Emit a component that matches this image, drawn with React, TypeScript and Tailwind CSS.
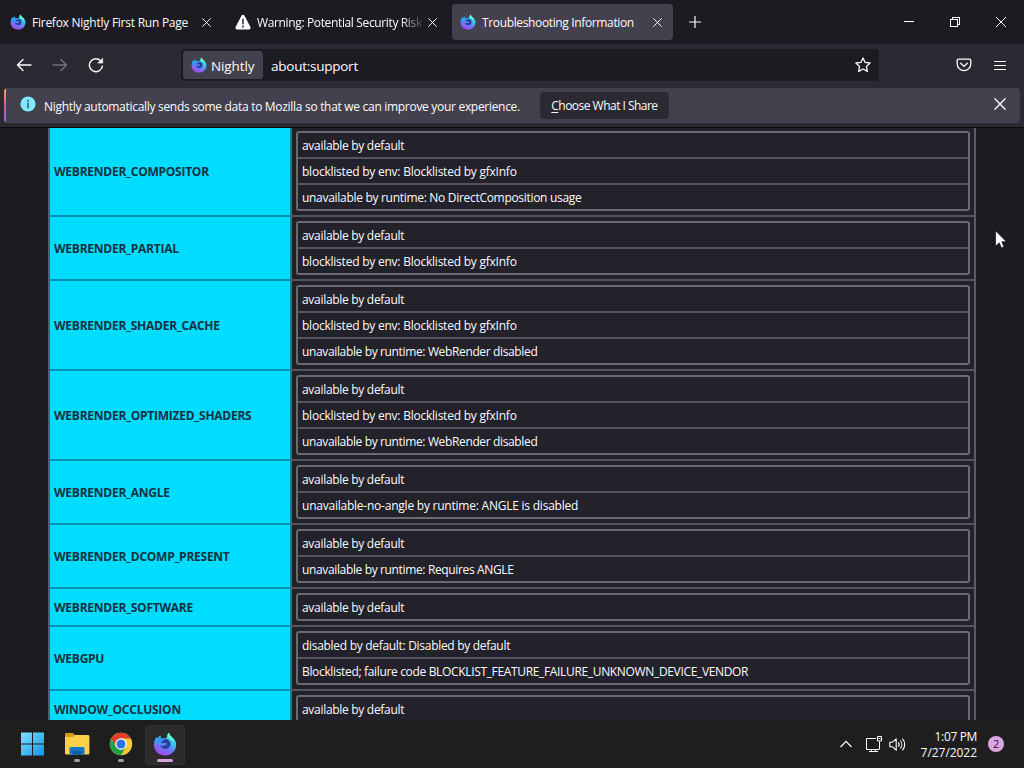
import type { ReactNode } from "react"

type Feature = {
  name: string
  log: string[]
}

const FEATURES: Feature[] = [
  {
    name: "WEBRENDER_COMPOSITOR",
    log: [
      "available by default",
      "blocklisted by env: Blocklisted by gfxInfo",
      "unavailable by runtime: No DirectComposition usage",
    ],
  },
  {
    name: "WEBRENDER_PARTIAL",
    log: ["available by default", "blocklisted by env: Blocklisted by gfxInfo"],
  },
  {
    name: "WEBRENDER_SHADER_CACHE",
    log: [
      "available by default",
      "blocklisted by env: Blocklisted by gfxInfo",
      "unavailable by runtime: WebRender disabled",
    ],
  },
  {
    name: "WEBRENDER_OPTIMIZED_SHADERS",
    log: [
      "available by default",
      "blocklisted by env: Blocklisted by gfxInfo",
      "unavailable by runtime: WebRender disabled",
    ],
  },
  {
    name: "WEBRENDER_ANGLE",
    log: ["available by default", "unavailable-no-angle by runtime: ANGLE is disabled"],
  },
  {
    name: "WEBRENDER_DCOMP_PRESENT",
    log: ["available by default", "unavailable by runtime: Requires ANGLE"],
  },
  {
    name: "WEBRENDER_SOFTWARE",
    log: ["available by default"],
  },
  {
    name: "WEBGPU",
    log: [
      "disabled by default: Disabled by default",
      "Blocklisted; failure code BLOCKLIST_FEATURE_FAILURE_UNKNOWN_DEVICE_VENDOR",
    ],
  },
  {
    name: "WINDOW_OCCLUSION",
    log: ["available by default"],
  },
]

// Letter spacing of a log line, by the kind of text in it
function lineTracking(line: string) {
  if (line.startsWith("blocklisted") || line.startsWith("unavailable-no")) return "tracking-[-0.23px]"
  if (line.endsWith("WebRender disabled") || line.endsWith("Requires ANGLE")) return "tracking-[-0.36px]"
  if (line.startsWith("Blocklisted")) return "tracking-[-0.34px]"
  return "tracking-[-0.3px]"
}

function NightlyLogo({ id, className }: { id: string; className: string }) {
  return (
    <svg viewBox="0 0 24 24" className={className}>
      <defs>
        <linearGradient id={`${id}-body`} x1="0.85" y1="0" x2="0.35" y2="1">
          <stop offset="0" stopColor="#5cf5d0" />
          <stop offset="0.35" stopColor="#2fd0f0" />
          <stop offset="0.65" stopColor="#6a7cf5" />
          <stop offset="1" stopColor="#a845ee" />
        </linearGradient>
        <linearGradient id={`${id}-flame`} x1="0" y1="0" x2="0.6" y2="1">
          <stop offset="0" stopColor="#25bdf6" />
          <stop offset="1" stopColor="#3f7df4" />
        </linearGradient>
      </defs>
      <path
        d="M16.200.8c.2 2.200 1.300 3 2.600 4.100C21.800 7.200 23.400 9.600 23.200 13c-.2 6.100-5 10.400-11.200 10.400C5.600 23.400.9 18.700.9 12.700c0-3 .9-5.700 2.800-7.700 0 .8.1 1.400.4 1.900C5 5.300 6 4.400 7.400 3.700c-.2 1 0 2 .6 2.700h3.200c1.200-.2 2.100-.5 2.900-1.100-.3-1.800.6-3.500 2.100-4.500z"
        fill={`url(#${id}-body)`}
      />
      <path
        d="M3.700 5c0 .8.1 1.400.4 1.900C5 5.300 6 4.400 7.400 3.700c-.2 1 0 2 .6 2.700h3.600c-.3 1.500-1.700 2-3 2.700-.5.3-.5 1-.4 1.700-2.400-.2-4.500.6-6.600 2.700.1-3.300.5-6.400 2.100-8.500z"
        fill={`url(#${id}-flame)`}
      />
      <path
        d="M8.200 10.800c.1-1 .4-1.500 1.300-1.900 1-.5 1.900-.9 2.200-1.800 2.800-.4 5.600 1.600 5.800 4.700.2 2.900-2 5.200-4.900 5.200-2.600 0-4.800-1.400-5.400-3.700 1.500.9 3 .8 4.300-.1.900-.6 1.500-1 2.500-.7-.8-1.600-2.200-1.700-3.500-1.200-.9.300-1.700.1-2.300-.5z"
        fill="#2b3fa4"
      />
      <path
        d="M16.200.8c.2 2.200 1.300 3 2.600 4.100 1.400 1.100 2 2.800 1.600 4.800-1-2.300-3.600-2.300-6.100-5.200 0-1.500.7-2.800 1.900-3.700z"
        fill="#6cf7cf"
      />
    </svg>
  )
}

function CloseIcon({ className, stroke }: { className: string; stroke: number }) {
  return (
    <svg viewBox="0 0 10 10" className={className} fill="none" stroke="#fbfbfe" strokeWidth={stroke} strokeLinecap="round">
      <path d="M.7.7l8.600 8.600M9.300.7L.7 9.300" />
    </svg>
  )
}

function TabStrip() {
  return (
    <div className="flex h-11 items-center">
      <div className="flex h-9 w-[226px] items-center pl-[10px]">
        <NightlyLogo id="tab1" className="size-4 shrink-0" />
        <span className="ml-[6px] w-[158px] whitespace-nowrap pt-[2px] tracking-[-0.25px]">Firefox Nightly First Run Page</span>
        <CloseIcon className="ml-3 size-[9px]" stroke={1.1} />
      </div>
      <div className="flex h-9 w-[226px] items-center pl-[9px]">
        <svg viewBox="0 0 16 16" className="size-4 shrink-0">
          <path d="M8 .8c.6 0 1.100.3 1.400.8l6 11.500c.6 1.100-.2 2.400-1.400 2.400H2c-1.200 0-2-1.300-1.400-2.400l6-11.500C6.900 1.100 7.400.8 8 .8z" fill="#fbfbfe" />
          <path d="M8 5.300v4.400M8 12v1" stroke="#1c1b22" strokeWidth="1.400" strokeLinecap="round" />
        </svg>
        <span className="ml-[6px] w-[168px] whitespace-nowrap pt-[2px] tracking-[-0.36px] [mask-image:linear-gradient(to_left,transparent,black_24px)]">
          Warning: Potential Security Risk
        </span>
        <CloseIcon className="ml-[3px] size-[9px] shrink-0" stroke={1.1} />
      </div>
      <div className="flex h-9 w-[221px] items-center rounded bg-[#42414d] pl-2">
        <NightlyLogo id="tab3" className="size-4 shrink-0" />
        <span className="ml-[6px] w-[158px] whitespace-nowrap pt-[2px] tracking-[-0.36px]">Troubleshooting Information</span>
        <CloseIcon className="ml-[13px] size-[9px]" stroke={1.1} />
      </div>
      <svg viewBox="0 0 12 12" className="ml-4 size-3" stroke="#fbfbfe" strokeWidth="1.200">
        <path d="M6 0v12M0 6h12" />
      </svg>
      <div className="ml-auto flex items-center pr-[18px]">
        <svg viewBox="0 0 10 10" className="size-[10px]" stroke="#fff" shapeRendering="crispEdges">
          <path d="M0 4.500h10" />
        </svg>
        <svg viewBox="0 0 10 10" className="ml-9 size-[10px]" stroke="#fff" fill="none" shapeRendering="crispEdges">
          <path d="M.5 2.500h7v7h-7zM2.500 2.500v-2h7v7h-2" />
        </svg>
        <svg viewBox="0 0 10 10" className="ml-9 size-[10px]" stroke="#fff" fill="none">
          <path d="M0 0l10 10M10 0L0 10" />
        </svg>
      </div>
    </div>
  )
}

function Toolbar() {
  return (
    <div className="flex h-11 items-center bg-[#2b2a33] pb-[2px]">
      <svg viewBox="0 0 16 16" className="ml-4 size-4" fill="none" stroke="#fbfbfe" strokeWidth="1.300" strokeLinecap="round" strokeLinejoin="round">
        <path d="M15 8H1.500M7 2.500L1.500 8 7 13.500" />
      </svg>
      <svg viewBox="0 0 16 16" className="ml-5 size-4" fill="none" stroke="#73727a" strokeWidth="1.300" strokeLinecap="round" strokeLinejoin="round">
        <path d="M1 8h13.500M9 2.500L14.500 8 9 13.500" />
      </svg>
      <svg viewBox="0 0 16 16" className="ml-5 size-4" fill="none" stroke="#fbfbfe" strokeWidth="1.400" strokeLinecap="round" strokeLinejoin="round">
        <path d="M14.300 9.300A6.500 6.500 0 1 1 12.600 3.700" />
        <path d="M14.700 1.500v4.600h-4.600z" fill="#fbfbfe" strokeWidth=".6" />
      </svg>
      <div className="ml-[77px] flex h-8 w-[698px] items-center rounded bg-[#1c1b22] pl-[2px] pr-2 text-[13.500px] tracking-[-0.25px]">
        <div className="flex h-7 w-20 items-center rounded-[3px] bg-[#42414d] pl-2">
          <NightlyLogo id="identity" className="size-4 shrink-0" />
          <span className="ml-1 pt-[2px] tracking-[-0.1px]">Nightly</span>
        </div>
        <span className="ml-2 pt-[2px]">about:support</span>
        <svg viewBox="0 0 16 16" className="ml-auto size-4" fill="none" stroke="#fbfbfe" strokeWidth="1.300" strokeLinejoin="round">
          <path d="M8 .9l2.100 4.500 5 .6-3.700 3.400 1 5L8 12l-4.400 2.400 1-5L.9 6l5-.6z" />
        </svg>
      </div>
      <svg viewBox="0 0 16 16" className="ml-[77px] size-4" fill="none" stroke="#fbfbfe" strokeWidth="1.300" strokeLinecap="round" strokeLinejoin="round">
        <path d="M2.500 2.200h11c.8 0 1.300.5 1.300 1.300v3.300a6.800 6.800 0 0 1-13.600 0V3.500c0-.8.5-1.300 1.300-1.300z" />
        <path d="M4.700 6.200L8 9.400l3.300-3.200" />
      </svg>
      <svg viewBox="0 0 12 11" className="ml-[22px] h-[11px] w-3" stroke="#fbfbfe" shapeRendering="crispEdges">
        <path d="M0 1.500h12M0 5.500h12M0 9.500h12" />
      </svg>
    </div>
  )
}

function Notification() {
  return (
    <div className="h-[39px] bg-[#2b2a33] px-1">
      <div className="flex h-[35px] overflow-hidden rounded-[4px] bg-[#42414d]">
        <div className="w-[2px] bg-gradient-to-b from-[#ffa436] via-[#e0509a] to-[#9059ff]" />
        <svg viewBox="0 0 16 16" className="ml-[14px] mt-2 size-4">
          <circle cx="8" cy="8" r="7.600" fill="#80ebff" />
          <path d="M8 7.200v4.600M8 4.200v1" stroke="#42414d" strokeWidth="1.400" strokeLinecap="round" />
        </svg>
        <span className="ml-2 mt-[10px] leading-[18px]">
          Nightly automatically sends some data to Mozilla so that we can improve your experience.
        </span>
        <button className="ml-5 mt-[4px] h-[27px] w-[129px] whitespace-nowrap rounded bg-[#2b2a33] pt-px leading-[26px] tracking-[-0.52px]">
          <span className="underline underline-offset-2">C</span>hoose What I Share
        </button>
        <CloseIcon className="ml-auto mr-[14px] mt-[10px] size-3" stroke={1.1} />
      </div>
    </div>
  )
}

function FeatureTable() {
  return (
    <div className="flex-1 overflow-hidden border-t border-[#0c0c0d]">
      <div className="ml-12 w-[928px] border-x-2 border-[#5b5b66]">
        {FEATURES.map((f, i) => (
          <div key={f.name} className="flex">
            <div
              className={`flex w-[240px] items-center border-b-2 border-[#0891b0] bg-[#00ddff] pl-1 font-bold tracking-[-0.25px] text-[#15313f] ${i === 0 ? "" : "pt-[2px]"}`}
            >
              {f.name}
            </div>
            <div className={`flex-1 border-b-2 border-l-2 border-b-[#55545f] border-l-[#187f94] bg-[#23222b] px-1 pb-1 ${i === 0 ? "pt-[3px]" : "pt-1"}`}>
              <div className="divide-y-2 divide-[#55545f] rounded-[3px] border-2 border-[#6b6a73]">
                {f.log.map((line) => (
                  <div key={line} className={`pl-1 pt-px leading-[23px] ${lineTracking(line)}`}>
                    {line}
                  </div>
                ))}
              </div>
            </div>
          </div>
        ))}
      </div>
    </div>
  )
}

function TaskItem({ active, children }: { active?: boolean; children: ReactNode }) {
  return (
    <div
      className={
        active
          ? "flex h-10 w-10 flex-col items-center rounded border border-[#323232] bg-[#2b2a2c] pt-[6px]"
          : "flex h-10 w-10 flex-col items-center pt-[7px]"
      }
    >
      {children}
    </div>
  )
}

function Taskbar() {
  return (
    <div className="flex h-12 items-center bg-[#1e1e1e]">
      <div className="ml-[13px] mt-px flex gap-1">
        <TaskItem>
          <svg viewBox="0 0 24 24" className="size-6">
            <defs>
              <linearGradient id="win" x1="0" y1="0" x2="1" y2="1">
                <stop offset="0" stopColor="#7fe3ff" />
                <stop offset="1" stopColor="#1292e8" />
              </linearGradient>
            </defs>
            <path d="M0 .5h11v11H0zM12 .5h11v11h-11zM0 12.500h11v11H0zM12 12.500h11v11h-11z" fill="url(#win)" />
          </svg>
        </TaskItem>
        <TaskItem>
          <svg viewBox="0 0 26 24" className="h-6 w-[26px]">
            <path d="M1 2.500C1 1.700 1.600 1 2.500 1h6.300l2.700 2.500V7H1z" fill="#d99a1c" />
            <path d="M1 5h8l2-2h13c.8 0 1.400.6 1.400 1.400V21c0 1-.6 1.600-1.500 1.600H2.500C1.600 22.600 1 22 1 21z" fill="#fcd04b" />
            <path d="M5.500 22.600v-6.200c0-.8.5-1.400 1.400-1.400h12.200c.9 0 1.400.6 1.400 1.400v6.200z" fill="#1575c9" />
            <path d="M8.500 19h9v3.600h-9z" fill="#0d5ba6" />
          </svg>
          <div className="mt-[3px] h-[3px] w-[6px] rounded-full bg-[#a0a0a0]" />
        </TaskItem>
        <TaskItem>
          <svg viewBox="0 0 24 24" className="size-6">
            <circle cx="12" cy="12" r="11.200" fill="#fcc934" />
            <path d="M2.300 6.400A11.200 11.200 0 0 1 21.700 6.400H12L7.150 14.800z" fill="#e33b2e" />
            <path d="M2.300 6.400A11.200 11.200 0 0 0 12 23.200L16.850 14.800 12 17.600 7.150 14.800z" fill="#21a04a" />
            <circle cx="12" cy="12" r="5.800" fill="#fff" />
            <circle cx="12" cy="12" r="4.500" fill="#2a74e8" />
          </svg>
          <div className="mt-[3px] h-[3px] w-[6px] rounded-full bg-[#a0a0a0]" />
        </TaskItem>
        <TaskItem active>
          <NightlyLogo id="task" className="size-6" />
          <div className="mt-[3px] h-[3px] w-4 rounded-full bg-[#d9a3dc]" />
        </TaskItem>
      </div>
      <svg viewBox="0 0 12 8" className="ml-auto h-2 w-3" fill="none" stroke="#fff" strokeWidth="1.200">
        <path d="M.5 7L6 1.300 11.500 7" />
      </svg>
      <svg viewBox="0 0 17 17" className="ml-[13px] size-[17px]" fill="none" stroke="#fff">
        <path d="M11 2.500H1.500v11h4M5.500 13.500h8.500M6.500 13.500v2M10.500 13.500v2M4 15.500h9M14.500 5.500v8" />
        <path d="M12.500.5h4v4.500h-4zM13.500 2.500h2" />
      </svg>
      <svg viewBox="0 0 17 15" className="ml-[7px] h-[15px] w-[17px]" fill="none" stroke="#fff" strokeWidth="1.100" strokeLinejoin="round">
        <path d="M.8 5.200h2.700L7.200 1.800v11.400L3.500 9.800H.8z" />
        <path d="M9.300 5.300a3.500 3.500 0 0 1 0 4.400M11.300 3.500a6 6 0 0 1 0 8M13.400 1.700a8.500 8.500 0 0 1 0 11.600" />
      </svg>
      <div className="ml-[13px] w-[58px] whitespace-nowrap pt-px text-right leading-4">
        <div className="tracking-[-0.35px]">1:07 PM</div>
        <div className="tracking-[-0.05px]">7/27/2022</div>
      </div>
      <div className="ml-[11px] mr-5 flex size-4 items-center justify-center rounded-full bg-[#dda3e2] text-[11px] text-[#222]">
        2
      </div>
    </div>
  )
}

export default function App() {
  return (
    <div className="relative flex h-[768px] w-[1024px] flex-col overflow-hidden bg-[#1c1b22] font-['Open_Sans','Noto_Sans',sans-serif] text-[12px] tracking-[-0.3px] text-[#fbfbfe]">
      <TabStrip />
      <Toolbar />
      <Notification />
      <FeatureTable />
      <Taskbar />
      {/* Mouse pointer */}
      <svg viewBox="0 0 12 19" className="absolute left-[995px] top-[230px] h-[19px] w-3">
        <path d="M.6.8v15.400l3.600-3.400 2.300 5.100 2.500-1.100-2.200-5h4.600z" fill="#fff" stroke="#111" strokeWidth=".7" />
      </svg>
    </div>
  )
}
